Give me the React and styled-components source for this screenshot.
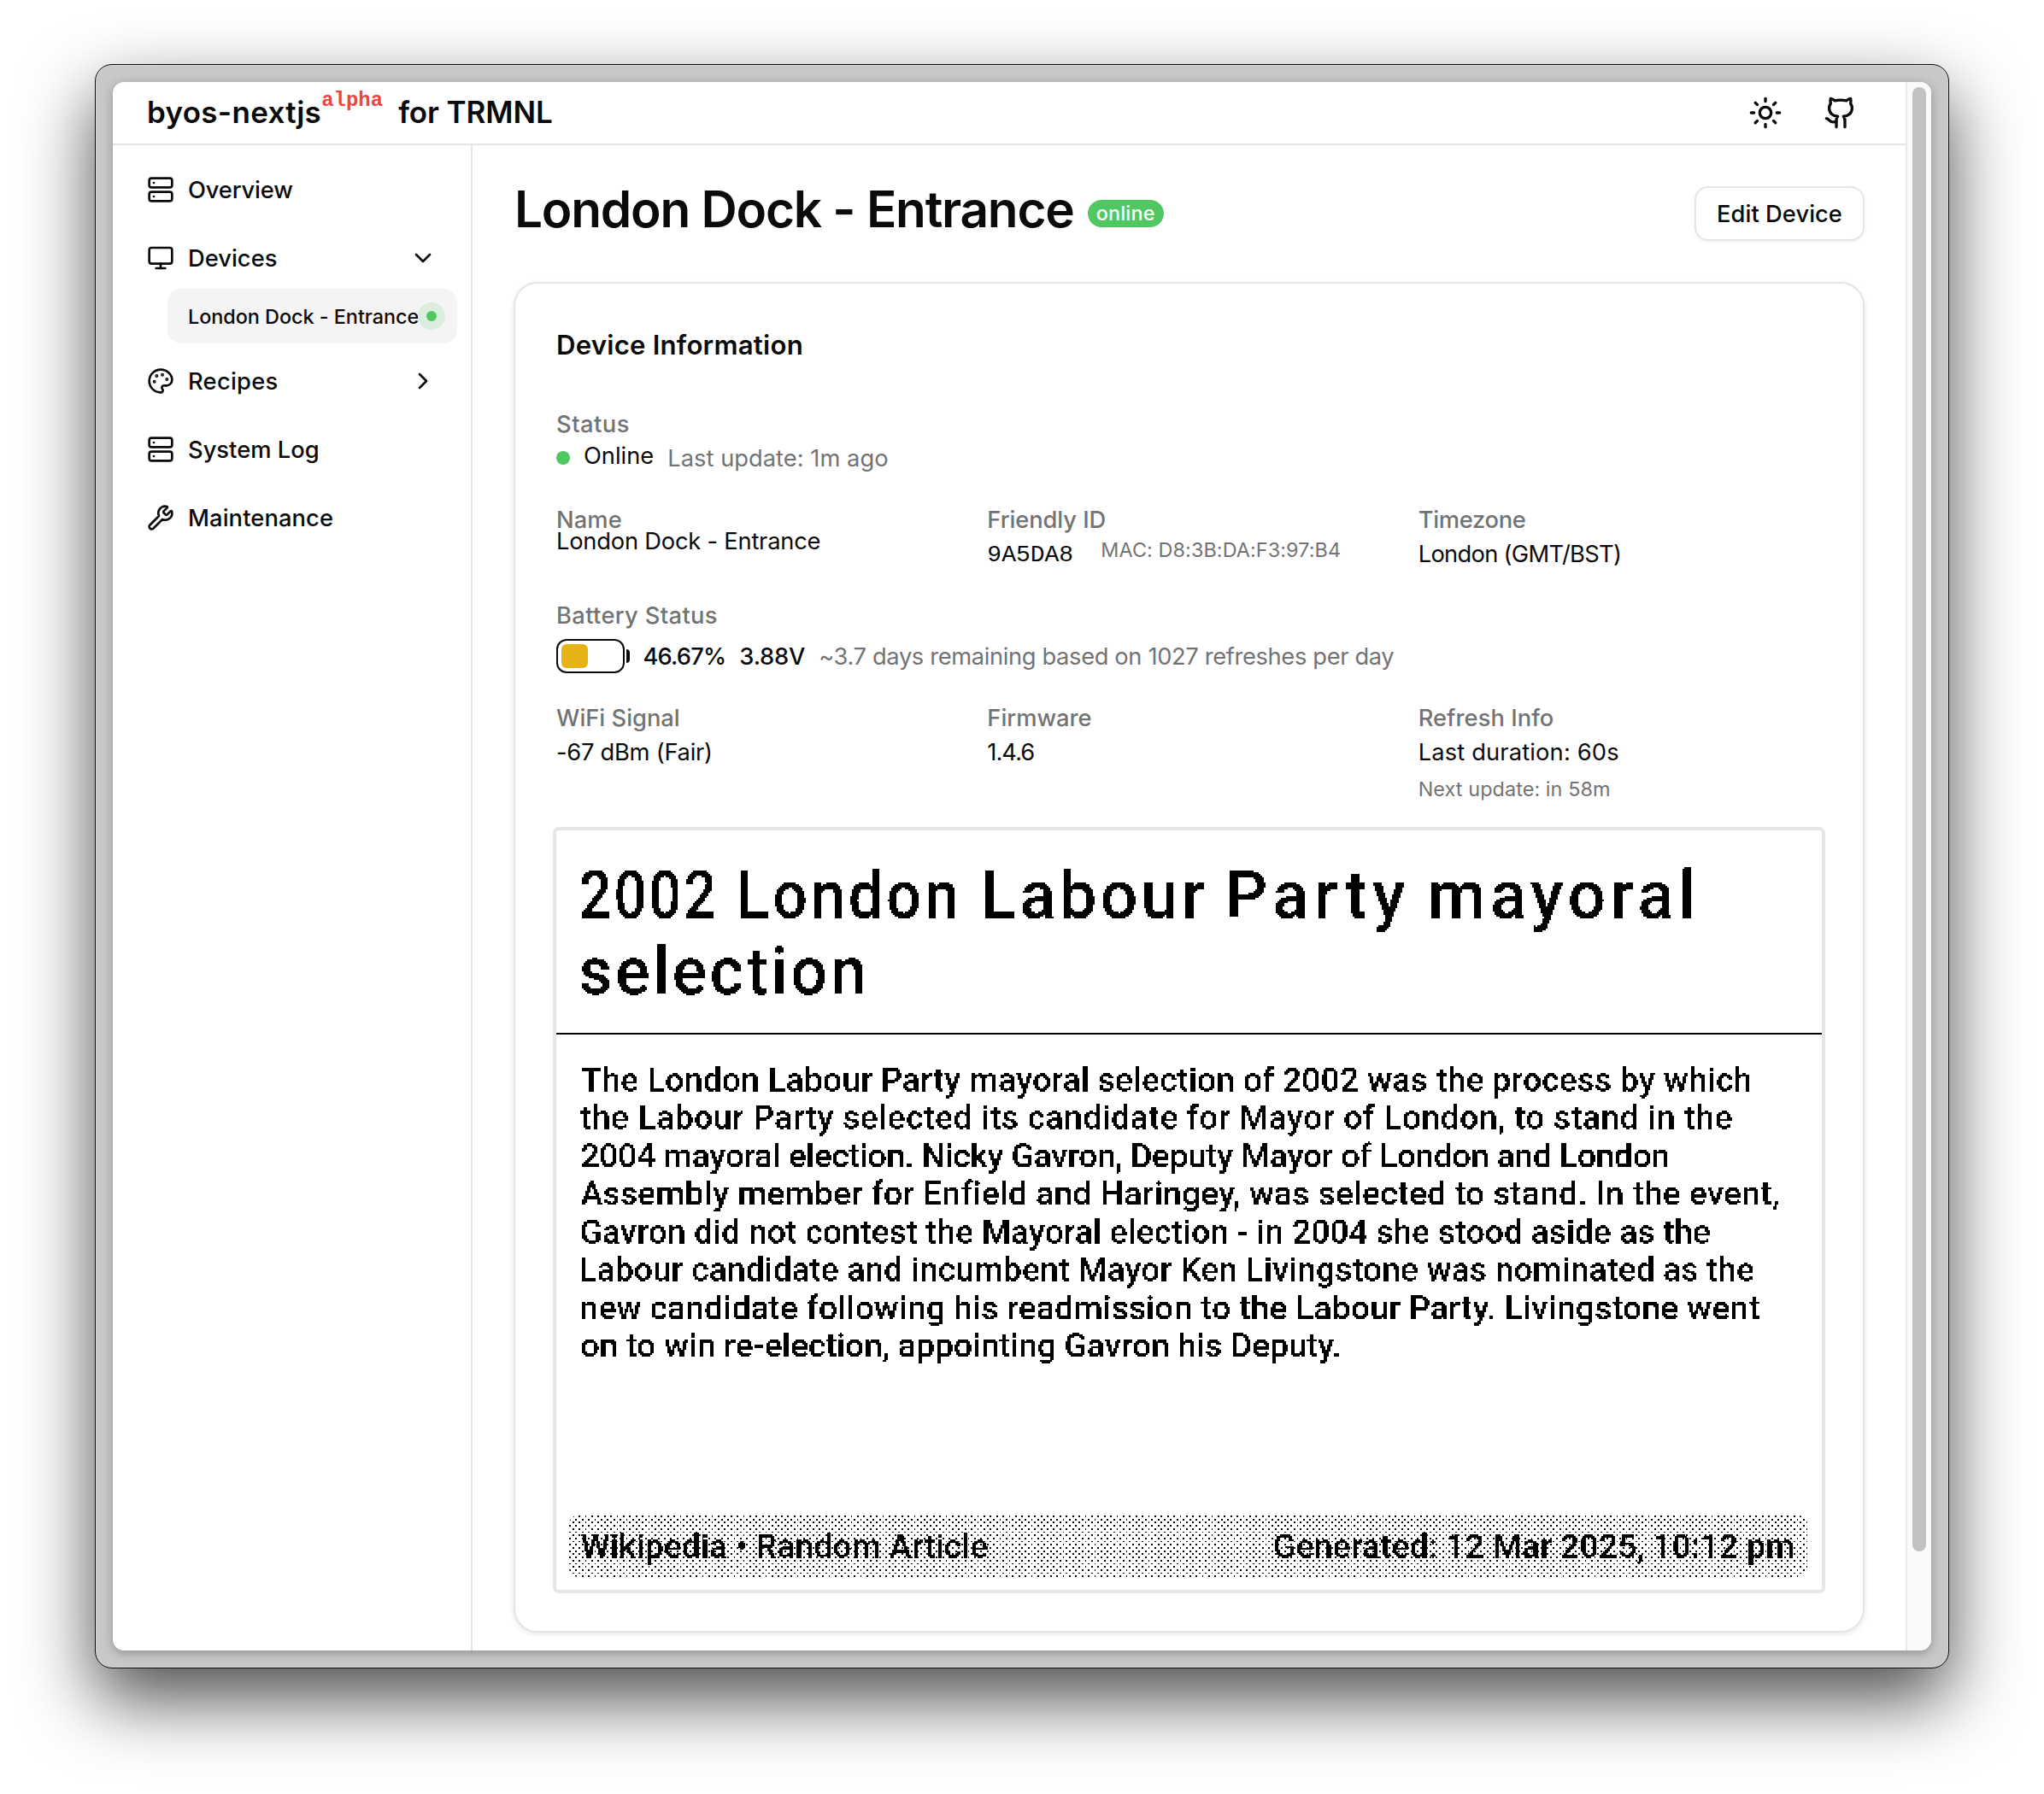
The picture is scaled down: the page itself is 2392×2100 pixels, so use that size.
import React from "react";
import styled, { createGlobalStyle, css } from "styled-components";
import {
  Server,
  Monitor,
  Palette,
  Wrench,
  ChevronDown,
  ChevronRight,
  Sun,
  Github,
} from "lucide-react";

const color = {
  text: "#0a0a0a",
  muted: "#737373",
  border: "#e5e5e5",
  accent: "#f4f4f4",
  green: "#50c760",
  yellow: "#e6b314",
  red: "#ee4444",
};

const sans = `Inter, "Liberation Sans", sans-serif`;
const mono = `"Liberation Mono", monospace`;

const GlobalStyle = createGlobalStyle`
  *, *::before, *::after { box-sizing: border-box; }
  body {
    margin: 0;
    background: #fff;
    color: ${color.text};
    font-family: ${sans};
  }
  svg { display: block; flex: none; }
`;

/* ---------- window ---------- */

const Desktop = styled.div`
  display: flex;
  width: 2392px;
  height: 2100px;
  padding: 75px 0 0 111px;
  overflow: hidden;
`;

const WindowFrame = styled.div`
  display: flex;
  width: 2170px;
  height: 1878px;
  padding: 20px;
  border: 1px solid #0c0c0c;
  border-radius: 20px;
  background: #c6c8c9;
  box-shadow: inset 0 0 0 1px #d3d5d5, 0 36px 84px rgba(0, 0, 0, 0.7);
`;

const Viewport = styled.div`
  display: flex;
  flex: 1;
  overflow: hidden;
  border-radius: 13px;
  background: #fff;
  box-shadow: 0 3px 12px rgba(0, 0, 0, 0.28);
`;

const Page = styled.div`
  display: flex;
  flex-direction: column;
  flex: 1;
  min-width: 0;
`;

const ScrollTrack = styled.div`
  width: 30px;
  padding: 6px 6px 0;
  border-left: 2px solid #e8e8e8;
  background: #fafafa;
`;

const ScrollThumb = styled.div`
  width: 16px;
  height: 1714px;
  border-radius: 8px;
  background: #c1c1c1;
`;

/* ---------- header ---------- */

const Header = styled.header`
  display: flex;
  align-items: center;
  justify-content: space-between;
  height: 74px;
  padding: 0 56px 0 40px;
  border-bottom: 2px solid ${color.border};
`;

const Brand = styled.div`
  padding-bottom: 2px;
  font-size: 35px;
  font-weight: 600;
  line-height: 40px;
  letter-spacing: -0.1px;
  white-space: nowrap;
`;

const BrandName = styled.span`
  letter-spacing: 0.3px;
`;

const Alpha = styled.sup`
  margin-right: 18px;
  color: ${color.red};
  font-family: ${mono};
  font-size: 24px;
  font-weight: 700;
  line-height: 0;
  letter-spacing: 0;
  vertical-align: 20px;
`;

const HeaderActions = styled.div`
  display: flex;
  gap: 48px;
`;

/* ---------- sidebar ---------- */

const Columns = styled.div`
  display: flex;
  flex: 1;
  min-height: 0;
`;

const Sidebar = styled.nav`
  width: 421px;
  padding: 20px 16px 0 0;
  border-right: 2px solid ${color.border};
`;

const NavRow = styled.div`
  display: flex;
  align-items: center;
  gap: 16px;
  height: 64px;
  padding: 0 24px 0 40px;
  margin-bottom: ${(p) => p.$after ?? 16}px;
`;

const NavLabel = styled.span`
  flex: 1;
  font-size: 27.3px;
  font-weight: 500;
  letter-spacing: ${(p) => p.$tracking ?? 0}px;
  white-space: nowrap;
`;

const SubItem = styled.div`
  display: flex;
  align-items: center;
  width: 339px;
  height: 64px;
  margin: 0 0 12px 64px;
  padding-left: 24px;
  border-radius: 16px;
  background: ${color.accent};
  font-size: 23.4px;
  font-weight: 500;
  letter-spacing: -0.03px;
  white-space: nowrap;
`;

const Pulse = styled.span`
  display: flex;
  align-items: center;
  justify-content: center;
  flex: none;
  width: 32px;
  height: 32px;
  margin-left: -1.5px;
  border-radius: 50%;
  background: #dbeddd;
`;

const Dot = styled.span`
  flex: none;
  width: ${(p) => p.$size}px;
  height: ${(p) => p.$size}px;
  border-radius: 50%;
  background: ${color.green};
`;

/* ---------- main ---------- */

const Main = styled.main`
  flex: 1;
  min-width: 0;
  padding: 48px 48px 0;
`;

const TitleBar = styled.div`
  display: flex;
  justify-content: space-between;
  height: 64px;
  margin-bottom: 48px;
`;

const TitleGroup = styled.div`
  display: flex;
  align-items: flex-start;
`;

const Title = styled.h1`
  margin: 0 0 0 1px;
  font-size: 58.5px;
  font-weight: 600;
  line-height: 54px;
  letter-spacing: -1.23px;
  white-space: nowrap;
`;

const Badge = styled.span`
  width: 89px;
  height: 32px;
  margin: 16px 0 0 16px;
  border-radius: 16px;
  background: ${color.green};
  color: #fff;
  font-size: 23.4px;
  font-weight: 500;
  line-height: 31px;
  letter-spacing: 0.19px;
  text-align: center;
`;

const Button = styled.button`
  width: 199px;
  height: 64px;
  padding: 0;
  border: 2px solid ${color.border};
  border-radius: 16px;
  background: #fff;
  box-shadow: 0 2px 4px rgba(0, 0, 0, 0.05);
  color: ${color.text};
  font: 500 27.3px ${sans};
  letter-spacing: 0.05px;
`;

const Card = styled.section`
  display: flex;
  flex-direction: column;
  padding: 48px;
  border: 2px solid ${color.border};
  border-radius: 28px;
  background: #fff;
  box-shadow: 0 2px 6px rgba(0, 0, 0, 0.1);
`;

const CardTitle = styled.h2`
  margin: 0 0 48px;
  font-size: 31.2px;
  font-weight: 600;
  line-height: 48px;
  letter-spacing: 0.2px;
`;

const Section = styled.div`
  margin-bottom: 32px;
`;

const Grid = styled.div`
  display: grid;
  grid-template-columns: repeat(3, minmax(0, 1fr));
  column-gap: 32px;
  margin-bottom: 32px;
`;

const type = css`
  padding-top: 2px;
  font-size: 27.3px;
  line-height: 38px;
  letter-spacing: ${(p) => p.$tracking ?? 0}px;
  white-space: nowrap;
`;

const Label = styled.div`
  ${type}
  color: ${color.muted};
  font-weight: 500;
`;

const Value = styled.div`
  ${type}
  font-weight: ${(p) => (p.$strong ? 500 : 400)};
  color: ${(p) => (p.$muted ? color.muted : color.text)};
`;

const NameValue = styled(Value)`
  margin-top: -10px;
  line-height: 28px;
`;

const Row = styled.div`
  display: flex;
  align-items: ${(p) => p.$align ?? "center"};
  gap: ${(p) => p.$gap}px;
  height: 40px;
`;

const StatusValue = styled(Value)`
  padding-bottom: 6px;
  margin: -3px 0 -3px;
`;

const IdValue = styled.span`
  width: 101px;
  font: 400 28px/44px ${mono};
`;

const Small = styled.div`
  color: ${color.muted};
  font-size: 23.4px;
  line-height: 31px;
  letter-spacing: 0.08px;
  white-space: nowrap;
`;

const NextUpdate = styled(Small)`
  margin-top: 8px;
  height: 32px;
`;

const BatteryRow = styled.div`
  display: flex;
  align-items: center;
  height: 40px;
  margin: 8px 0 0;
`;

const BatteryCell = styled.div`
  width: 80px;
  height: 40px;
  padding: 4px;
  border: 2px solid ${color.text};
  border-radius: 12px;
`;

const BatteryLevel = styled.div`
  width: 31px;
  height: 28px;
  border-radius: 6px;
  background: ${color.yellow};
`;

const BatteryTip = styled.div`
  width: 4px;
  height: 16px;
  margin: 0 16px 0 1.5px;
  border-radius: 0 4px 4px 0;
  background: ${color.text};
`;

const Voltage = styled(Value)`
  margin: 0 16px 0 16px;
`;

/* ---------- e-ink screen ---------- */

const Screen = styled.div`
  display: flex;
  flex-direction: column;
  height: 889px;
  border-radius: 3px;
  background: #fff;
  box-shadow: 0 0 0 4px #e5e6ea;
  color: #000;
  font-family: Roboto, "Liberation Sans", sans-serif;
`;

const HiddenDefs = styled.svg`
  width: 0;
  height: 0;
`;

const ScreenHead = styled.div`
  height: 239px;
  padding: 31px 0 0 26px;
  border-bottom: 2px solid #000;
`;

const Headline = styled.div`
  height: 190px;
  filter: url(#one-bit);
  font-size: 78px;
  font-weight: 500;
  line-height: 89px;
  white-space: nowrap;
`;

const HeadlineRow = styled.div`
  display: flex;
`;

const Word = styled.span`
  flex: none;
  width: ${(p) => p.$advance}px;
  letter-spacing: ${(p) => p.$tracking}px;
  transform: scaleX(${(p) => p.$narrow});
  transform-origin: 0 50%;
`;

const Article = styled.div`
  height: 380px;
  margin: 31px 0 0 26px;
  filter: url(#one-bit);
  font-size: 39px;
  font-weight: 500;
  line-height: 44.45px;
`;

const ArticleLine = styled.div`
  padding-left: ${(p) => p.$indent}px;
  letter-spacing: ${(p) => p.$tracking}px;
  white-space: nowrap;
`;

const ScreenFoot = styled.div`
  position: relative;
  height: 72px;
  margin: auto 17px 15px 15px;
  border-radius: 10px;
  overflow: hidden;
`;

const Dither = styled.svg`
  position: absolute;
  inset: 0;
  width: 100%;
  height: 100%;
`;

const FootText = styled.div`
  position: relative;
  display: flex;
  justify-content: space-between;
  height: 72px;
  padding: 0 15px 0 13px;
  filter: url(#one-bit);
  font-size: 39px;
  font-weight: 500;
  line-height: 72px;
  white-space: nowrap;
`;

const FootItem = styled.span`
  letter-spacing: ${(p) => p.$tracking}px;
`;

/* word, advance, tracking, horizontal scale */
const headline = [
  [
    ["2002", 184, 3.2, 0.86],
    ["London", 286, 4.3, 0.92],
    ["Labour", 286, 3.9, 1],
    ["Party", 237, 6.5, 1],
    ["mayoral", 320, 5.7, 1],
  ],
  [["selection", 340, 3.6, 0.97]],
];

/* text, tracking, indent */
const articleLines = [
  ["The London Labour Party mayoral selection of 2002 was the process by which", 0.155, 3],
  ["the Labour Party selected its candidate for Mayor of London, to stand in the", 0.47, 2],
  ["2004 mayoral election. Nicky Gavron, Deputy Mayor of London and London", -0.35, 2],
  ["Assembly member for Enfield and Haringey, was selected to stand. In the event,", 0.24, 2],
  ["Gavron did not contest the Mayoral election - in 2004 she stood aside as the", 0.03, 1],
  ["Labour candidate and incumbent Mayor Ken Livingstone was nominated as the", 0.06, 0],
  ["new candidate following his readmission to the Labour Party. Livingstone went", 0.19, 1],
  ["on to win re-election, appointing Gavron his Deputy.", -0.06, 2],
];

const PX = 1.85125;
const ditherRows = Array.from({ length: 20 }, (_, i) => i);

/* Snaps text to hard-edged 2px blocks, the way a 1-bit panel shows it. */
function OneBitFilter() {
  return (
    <HiddenDefs aria-hidden="true">
      <filter
        id="one-bit"
        x="0"
        y="0"
        width="1"
        height="1"
        primitiveUnits="userSpaceOnUse"
        colorInterpolationFilters="sRGB"
      >
        <feFlood x="0" y="0" width="1" height="1" floodColor="#000" result="seed" />
        <feOffset in="seed" dx="0" dy="0" x="0" y="0" width="2" height="2" result="cell" />
        <feTile in="cell" result="grid" />
        <feComposite in="SourceGraphic" in2="grid" operator="in" result="samples" />
        <feComponentTransfer in="samples" result="bits">
          <feFuncA type="discrete" tableValues="0 1" />
        </feComponentTransfer>
        <feOffset in="bits" dx="1" dy="0" result="right" />
        <feMerge result="pair">
          <feMergeNode in="bits" />
          <feMergeNode in="right" />
        </feMerge>
        <feOffset in="pair" dx="0" dy="1" result="below" />
        <feMerge>
          <feMergeNode in="pair" />
          <feMergeNode in="below" />
        </feMerge>
      </filter>
    </HiddenDefs>
  );
}

function EinkScreen() {
  return (
    <Screen>
      <ScreenHead>
        <Headline>
          {headline.map((words, i) => (
            <HeadlineRow key={i}>
              {words.map(([text, advance, tracking, narrow]) => (
                <Word key={text} $advance={advance} $tracking={tracking} $narrow={narrow}>
                  {text}
                </Word>
              ))}
            </HeadlineRow>
          ))}
        </Headline>
      </ScreenHead>
      <Article>
        {articleLines.map(([text, tracking, indent]) => (
          <ArticleLine key={text} $tracking={tracking} $indent={indent}>
            {text}
          </ArticleLine>
        ))}
      </Article>
      <ScreenFoot>
        <Dither shapeRendering="crispEdges" aria-hidden="true">
          {ditherRows.map((i) => (
            <line
              key={i}
              x1="0"
              x2="1449"
              y1={(i * 2 + 0.5) * PX}
              y2={(i * 2 + 0.5) * PX}
              stroke="#000"
              strokeWidth={PX}
              strokeDasharray={`${PX} ${PX * 3}`}
              strokeDashoffset={i % 2 ? 0 : PX * 2}
            />
          ))}
        </Dither>
        <FootText>
          <FootItem $tracking={0.15}>Wikipedia • Random Article</FootItem>
          <FootItem $tracking={0.2}>Generated: 12 Mar 2025, 10:12 pm</FootItem>
        </FootText>
      </ScreenFoot>
      <OneBitFilter />
    </Screen>
  );
}

/* ---------- app ---------- */

export default function App() {
  return (
    <>
      <GlobalStyle />
      <Desktop>
        <WindowFrame>
          <Viewport>
            <Page>
              <Header>
                <Brand>
                  <BrandName>byos-nextjs</BrandName>
                  <Alpha>alpha</Alpha>for TRMNL
                </Brand>
                <HeaderActions>
                  <Sun size={40} />
                  <Github size={40} />
                </HeaderActions>
              </Header>
              <Columns>
                <Sidebar>
                  <NavRow>
                    <Server size={32} />
                    <NavLabel $tracking={-0.15}>Overview</NavLabel>
                  </NavRow>
                  <NavRow $after={4}>
                    <Monitor size={32} />
                    <NavLabel $tracking={0.02}>Devices</NavLabel>
                    <ChevronDown size={32} />
                  </NavRow>
                  <SubItem>
                    London Dock - Entrance
                    <Pulse>
                      <Dot $size={12} />
                    </Pulse>
                  </SubItem>
                  <NavRow>
                    <Palette size={32} />
                    <NavLabel $tracking={0.28}>Recipes</NavLabel>
                    <ChevronRight size={32} />
                  </NavRow>
                  <NavRow>
                    <Server size={32} />
                    <NavLabel $tracking={0.02}>System Log</NavLabel>
                  </NavRow>
                  <NavRow>
                    <Wrench size={32} />
                    <NavLabel $tracking={0.11}>Maintenance</NavLabel>
                  </NavRow>
                </Sidebar>
                <Main>
                  <TitleBar>
                    <TitleGroup>
                      <Title>London Dock - Entrance</Title>
                      <Badge>online</Badge>
                    </TitleGroup>
                    <Button>Edit Device</Button>
                  </TitleBar>
                  <Card>
                    <CardTitle>Device Information</CardTitle>
                    <Section>
                      <Label $tracking={0.5}>Status</Label>
                      <Row $gap={16}>
                        <Dot $size={16} />
                        <StatusValue>Online</StatusValue>
                        <Value $muted $tracking={0.02}>
                          Last update: 1m ago
                        </Value>
                      </Row>
                    </Section>
                    <Grid>
                      <div>
                        <Label $tracking={0.1}>Name</Label>
                        <NameValue $tracking={-0.22}>London Dock - Entrance</NameValue>
                      </div>
                      <div>
                        <Label $tracking={-0.08}>Friendly ID</Label>
                        <Row $gap={32} $align="flex-start">
                          <IdValue>9A5DA8</IdValue>
                          <Small>MAC: D8:3B:DA:F3:97:B4</Small>
                        </Row>
                      </div>
                      <div>
                        <Label $tracking={-0.3}>Timezone</Label>
                        <Value $tracking={-0.7}>London (GMT/BST)</Value>
                      </div>
                    </Grid>
                    <Section>
                      <Label $tracking={0.35}>Battery Status</Label>
                      <BatteryRow>
                        <BatteryCell>
                          <BatteryLevel />
                        </BatteryCell>
                        <BatteryTip />
                        <Value $strong $tracking={-0.81}>
                          46.67%
                        </Value>
                        <Voltage $strong $tracking={-0.2}>
                          3.88V
                        </Voltage>
                        <Value $muted $tracking={-0.36}>
                          ~3.7 days remaining based on 1027 refreshes per day
                        </Value>
                      </BatteryRow>
                    </Section>
                    <Grid>
                      <div>
                        <Label>WiFi Signal</Label>
                        <Value $tracking={-0.26}>-67 dBm (Fair)</Value>
                      </div>
                      <div>
                        <Label>Firmware</Label>
                        <Value $tracking={-0.96}>1.4.6</Value>
                      </div>
                      <div>
                        <Label $tracking={0.05}>Refresh Info</Label>
                        <Value $tracking={0.15}>Last duration: 60s</Value>
                        <NextUpdate>Next update: in 58m</NextUpdate>
                      </div>
                    </Grid>
                    <EinkScreen />
                  </Card>
                </Main>
              </Columns>
            </Page>
            <ScrollTrack>
              <ScrollThumb />
            </ScrollTrack>
          </Viewport>
        </WindowFrame>
      </Desktop>
    </>
  );
}
